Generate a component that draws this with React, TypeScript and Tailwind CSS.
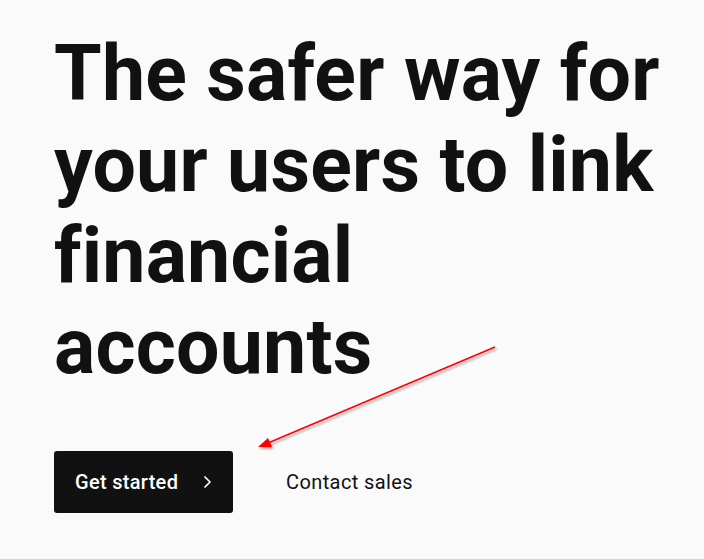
import React from "react";

// Hero — headline + CTA row, with a red annotation arrow on top

const Chevron: React.FC = () => (
  <svg width="10" height="14" viewBox="0 0 10 14" fill="none" className="flex-shrink-0">
    <path d="M3 2 L8 7 L3 12" stroke="#fff" strokeWidth="1.7" strokeLinecap="round" strokeLinejoin="round" />
  </svg>
);

const AnnotationArrow: React.FC = () => (
  <svg
    className="absolute left-0 top-0 pointer-events-none"
    width="704"
    height="559"
    viewBox="0 0 704 559"
  >
    <defs>
      <filter id="shadow" x="-20%" y="-20%" width="140%" height="140%">
        <feDropShadow dx="1.5" dy="2" stdDeviation="1.2" floodColor="#000" floodOpacity="0.35" />
      </filter>
    </defs>
    <g filter="url(#shadow)">
      <line x1="495" y1="347" x2="268" y2="443" stroke="#f00" strokeWidth="1.6" />
      <polygon points="258,447 268,438 272,447" fill="#f00" />
    </g>
  </svg>
);

export default function App() {
  return (
    <div
      className="relative w-[704px] h-[559px] overflow-hidden bg-[#fafafa] text-[#111]"
      style={{ fontFamily: "Roboto, 'Liberation Sans', sans-serif" }}
    >
      <div className="pl-[54px] pt-[29px]">
        <h1 className="text-[77px] leading-[91px] font-bold tracking-[0.2px] w-[616px]">
          The safer way for your users to link financial accounts
        </h1>

        <div className="flex items-center mt-[58px]">
          <button className="flex items-center gap-[24px] h-[62px] w-[179px] pl-[21px] rounded-[3px] bg-[#111] text-white text-[20px] font-medium tracking-[0.3px]">
            Get started
            <Chevron />
          </button>
          <a className="ml-[53px] text-[20px] tracking-[0.4px] text-[#111]">Contact sales</a>
        </div>
      </div>

      <AnnotationArrow />
    </div>
  );
}
